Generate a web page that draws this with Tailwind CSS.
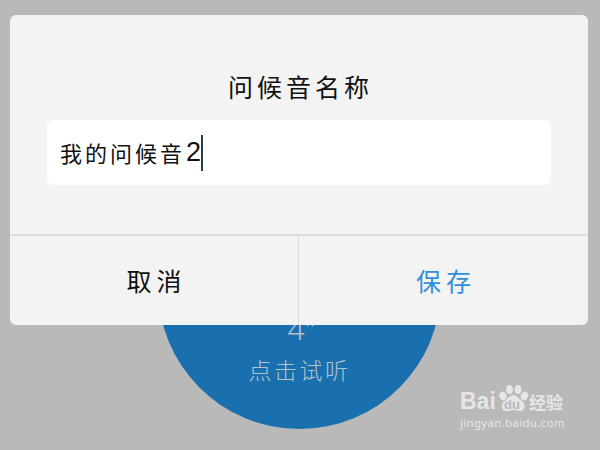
<!DOCTYPE html>
<html lang="zh">
<head>
<meta charset="utf-8">
<script src="https://cdn.jsdelivr.net/npm/@tailwindcss/browser@4"></script>
</head>
<body class="m-0">
<div class="relative w-[600px] h-[450px] overflow-hidden bg-[#b9b9b9] font-['Liberation_Sans','Noto_Sans_CJK_SC',sans-serif]">
  <!-- circle behind the dialog -->
  <div class="absolute left-[158px] top-[146px] w-[283px] h-[283px] rounded-full bg-[#1a6fae] flex flex-col items-center text-[#b4c2cc]">
    <div class="mt-[168px] h-[30px] text-[30px] leading-[30px] font-light pl-[4px] font-['Noto_Sans',sans-serif]">4"</div>
    <div class="mt-[10px] text-[23px] leading-[30px] tracking-[2.5px] font-light font-['Noto_Sans_CJK_SC',sans-serif]">点击试听</div>
  </div>

  <!-- dialog -->
  <div class="absolute left-[10px] top-[15px] w-[578px] h-[310px] rounded-[6px] bg-[#f3f3f3] flex flex-col">
    <div class="flex-1 flex flex-col items-center">
      <div class="mt-[54px] h-[34px] text-[25px] leading-[34px] tracking-[4px] pl-[3px] text-[#111] font-['Noto_Sans_CJK_SC',sans-serif]">问候音名称</div>
      <div class="mt-[17px] w-[504px] h-[65px] rounded-[6px] bg-white flex items-center pl-[13px]">
        <span class="text-[22px] tracking-[3px] text-[#111] font-['Noto_Sans_CJK_SC',sans-serif]">我的问候音</span><span class="text-[27px] text-[#111] ml-[1px] font-['Liberation_Sans',sans-serif]">2</span><span class="w-[2px] h-[36px] bg-[#2a3a4a]"></span>
      </div>
    </div>
    <div class="h-[91px] border-t-[2px] border-[#dedede] flex">
      <div class="w-[289px] border-r border-[#dcdcdc] flex items-center justify-center text-[25px] tracking-[5px] pl-[5px] text-[#111] font-['Noto_Sans_CJK_SC',sans-serif]">取消</div>
      <div class="flex-1 flex items-center justify-center text-[25px] tracking-[5px] pl-[5px] text-[#2f8fdc] font-['Noto_Sans_CJK_SC',sans-serif]">保存</div>
    </div>
  </div>

  <!-- watermark -->
  <div class="absolute left-[460px] top-[385px] w-[110px] h-[46px] text-[#e6e6e6]">
    <div class="flex items-end h-[28px]">
      <span class="text-[23px] leading-[24px] font-bold font-['Liberation_Sans',sans-serif] w-[36px]">Bai</span>
      <span class="relative w-[33px] h-[28px]">
        <svg viewBox="0 0 33 28" class="absolute inset-0 w-[33px] h-[28px]" fill="#e6e6e6">
          <ellipse cx="7" cy="11" rx="3.6" ry="4.4" transform="rotate(-25 7 11)"/>
          <ellipse cx="13.5" cy="4.5" rx="3.4" ry="4.5"/>
          <ellipse cx="22" cy="4.5" rx="3.4" ry="4.5"/>
          <ellipse cx="28.5" cy="11" rx="3.6" ry="4.4" transform="rotate(25 28.5 11)"/>
          <path d="M17.5 10c4 0 5 4 9 6.5c4 3 2.5 9.5 -3 9.5c-3 0 -4 -1 -6 -1s-3.5 1 -6.500 1c-5.500 0 -7 -6 -3 -9.500c4 -2.500 5.500 -6.500 9.500 -6.500z"/>
        </svg>
        <span class="absolute left-[8px] top-[13px] text-[13px] leading-[13px] font-bold text-[#b9b9b9] font-['Liberation_Sans',sans-serif]">du</span>
      </span>
      <span class="text-[17px] leading-[22px] font-bold font-['Noto_Sans_CJK_SC',sans-serif]">经验</span>
    </div>
    <div class="mt-[2px] text-[11.500px] leading-[16px] tracking-[0.3px] whitespace-nowrap font-['Noto_Sans',sans-serif]">jingyan.baidu.com</div>
  </div>
</div>
</body>
</html>
